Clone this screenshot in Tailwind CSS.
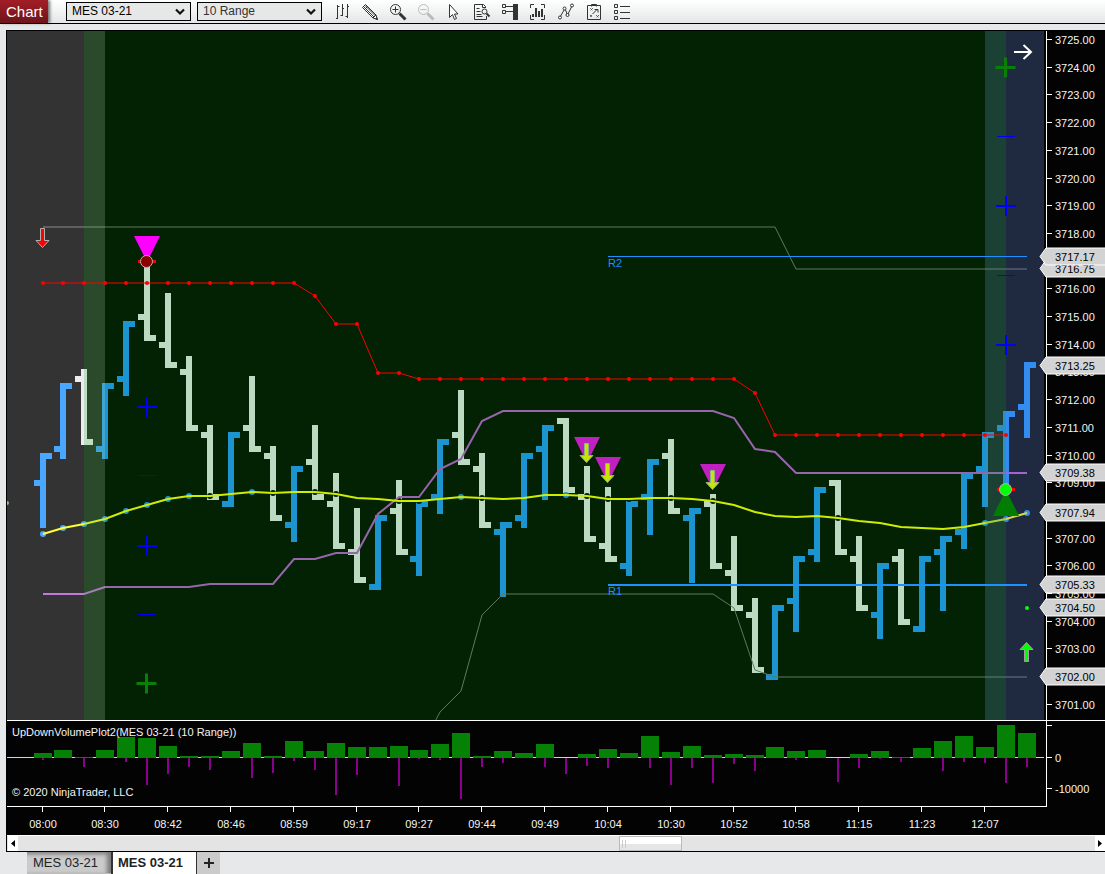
<!DOCTYPE html>
<html lang="en">
  <head>
    <meta charset="utf-8" />
    <meta name="viewport" content="width=device-width, initial-scale=1" />
    <title>Chart - MES 03-21</title>
    <script src="https://cdn.jsdelivr.net/npm/@tailwindcss/browser@4"></script>
  </head>
  <body class="flex min-h-screen flex-col bg-[#e6e8e9] font-['Liberation_Sans',Arial,sans-serif] text-[#222]">
    <header class="flex h-6 items-stretch border-b border-black bg-linear-to-b from-white to-[#e4e6e7]">
      <h1 class="w-12 bg-linear-to-b from-[#a31e26] to-[#6f141a] pl-1.5 text-[15px] leading-6 text-white shadow-[2px_0_3px_#0008]">Chart</h1>
      <div class="flex items-center gap-1.5 pl-[18px]">
        <label class="relative block">
          <span class="sr-only">Instrument</span>
          <select class="block h-[19px] w-[125px] appearance-none border border-black bg-[#e6e8e7] pl-[5px] text-[12px] leading-[17px] text-black">
            <option>MES 03-21</option>
          </select>
          <svg class="pointer-events-none absolute top-1.5 right-1.5 h-2 w-2.5" viewBox="0 0 10 8" fill="none" stroke="#111" stroke-width="2.2"><path d="M1 1.5l4 4 4-4" /></svg>
        </label>
        <label class="relative block">
          <span class="sr-only">Interval</span>
          <select class="block h-[19px] w-[125px] appearance-none border border-black bg-[#e6e8e7] pl-[5px] text-[12px] leading-[17px] text-[#333]">
            <option>10 Range</option>
          </select>
          <svg class="pointer-events-none absolute top-1.5 right-1.5 h-2 w-2.5" viewBox="0 0 10 8" fill="none" stroke="#111" stroke-width="2.2"><path d="M1 1.5l4 4 4-4" /></svg>
        </label>
      </div>
      <nav id="tools" class="flex items-center pl-1.5" aria-label="Chart tools"></nav>
    </header>

    <main class="mt-1.5 ml-1.5 border-t border-b border-l border-black bg-black">
      <svg id="chart" class="block h-auto w-full bg-[#030303] text-[11px]" viewBox="7 31 1098 804" role="img" aria-label="MES 03-21 10 Range chart"></svg>
      <div class="flex h-4 border-t border-white bg-[#e4e4e4]">
        <button class="ml-px flex w-2.5 items-center justify-center bg-white" aria-label="Scroll left">
          <svg class="h-[7px] w-1" viewBox="0 0 4 7"><path d="M4 0v7L0 3.5z" /></svg>
        </button>
        <div class="flex-[16]"></div>
        <div class="flex w-[63px] items-center gap-0.5 border border-[#bbb] bg-linear-to-b from-white from-50% to-[#e6e6e6] to-55% pl-0.5">
          <span class="h-2 w-px bg-[#ccc]"></span>
          <span class="h-2 w-px bg-[#ccc]"></span>
        </div>
        <div class="flex-[11]"></div>
        <button class="flex w-2.5 items-center justify-center bg-white" aria-label="Scroll right">
          <svg class="h-[7px] w-1" viewBox="0 0 4 7"><path d="M0 0v7l4-3.5z" /></svg>
        </button>
      </div>
    </main>

    <footer class="flex h-[22px] pl-[27px] text-[13px] leading-5">
      <button class="w-[84px] border-b border-[#bbb] bg-[#cbcbcb] pl-1.5 text-left shadow-[inset_-4px_2px_4px_#0006]">MES 03-21</button>
      <button class="w-[86px] border-r border-l-2 border-[#333] bg-white pl-[5px] text-left font-bold">MES 03-21</button>
      <button class="flex w-[23px] items-center justify-center bg-[#cbcbcb]" aria-label="New tab">
        <svg class="size-3" viewBox="0 0 12 12" stroke="#222" stroke-width="2"><path d="M6 1v10M1 6h10" /></svg>
      </button>
    </footer>

    <script>
      const icons = [
        ["Chart style", `<path d="M4.500 2v14M3 15.500h1M5 3.500h1.500M9.500 1v12M7.500 12.500h1.500M10 5.500h1M14.500 1v14M12.500 13.500h1.500M15 3.500h1"/>`],
        ["Drawing tools", `<path d="M1.500 4.500l3-3L15 12l1.500 4.500L12 15z" fill="#fff"/><path d="M2.500 3.500l10.500 10.500M4 2.500l10.500 10.500"/><path d="M3.500 6.500l3-3M12 15l3-3"/><path d="M14.500 15.500l1-1 1 2z" fill="#333"/>`],
        ["Zoom in", `<circle cx="6.500" cy="6.500" r="5"/><path d="M6.500 3.500v6M3.500 6.500h6"/><path d="M10.500 10.500l6 6" stroke-width="3"/>`],
        ["Zoom out", `<g stroke="#bbb"><circle cx="6.500" cy="6.500" r="5"/><path d="M3.500 6.500h6"/><path d="M10.500 10.500l6 6" stroke-width="3"/></g>`],
        ["Pointer", `<path d="M4.500 1.500v13l3-3 2 5 2-1-2-4.500h3.500z" fill="#fff"/>`],
        ["Data box", `<path d="M12.500 5V3.500l-2-2h-9v15h12V13M9.500 1.500v3h3M3.500 5.500h3M3.500 8.500h4M3.500 11.500h5M3.500 13.500h6"/><circle cx="11.500" cy="8.500" r="2.500"/><path d="M13.500 10.500l3 3" stroke-width="2"/>`],
        ["Chart trader", `<path d="M1.500 1.500h3v3h-3zM1.500 7.500h3v3h-3zM5 3.500h7M5 8.500h7"/><path d="M12 1h5v16h-5z" fill="#333" stroke="none"/>`],
        ["Indicators", `<path d="M1.500 5V1.500H5M12 1.500h3.500V5M1.500 12v4.500H5M12 16.500h3.500V12"/><path d="M4 14v-3M7 14V5M10 14V8M13 14V6" stroke-width="2"/>`],
        ["Strategies", `<path d="M3 14l5-8.500 2.500 6.500L15 3"/><g fill="#fff"><circle cx="3" cy="14.500" r="1.500"/><circle cx="7.500" cy="5.500" r="1.500"/><circle cx="10.500" cy="12" r="1.500"/><circle cx="15" cy="2.500" r="1.500"/></g>`],
        ["Properties", `<path d="M2.500 2.500h13v14h-13zM6.500 3.500v-2h5v2"/><path d="M5 5l3 3M8 5l-3 3M5 12l2 2M7 12l-2 2M11 12l3 3M14 12l-3 3" stroke-dasharray="1 1"/><path d="M7.500 11l5-5M9.500 6.500h3.500v3"/>`],
        ["Menu", `<path d="M1.500 1.500h3v3h-3zM1.500 7.500h3v3h-3zM1.500 13.500h3v3h-3zM7 3.500h10M7 9.500h10M7 15.500h10"/>`],
      ];

      document.getElementById("tools").innerHTML = icons
        .map(
          ([name, body]) => `
          <button class="flex h-5 w-7 items-center justify-center" title="${name}" aria-label="${name}">
            <svg class="size-[18px]" viewBox="0 0 18 18" fill="none" stroke="#333">${body}</svg>
          </button>`
        )
        .join("");

      // open, high, low, close
      const bars = [
        [3709, 3710, 3707.5, 3710],
        [3710.25, 3712.5, 3710, 3712.5],
        [3712.75, 3713, 3710.5, 3710.5],
        [3710.25, 3712.5, 3710, 3712.5],
        [3712.75, 3714.75, 3712.25, 3714.75],
        [3715, 3716.75, 3714.25, 3714.25],
        [3714, 3715.75, 3713.25, 3713.25],
        [3713, 3713.5, 3711, 3711],
        [3710.75, 3711, 3708.5, 3708.5],
        [3708.25, 3710.75, 3708.25, 3710.75],
        [3711, 3712.75, 3710.25, 3710.25],
        [3710, 3710.25, 3707.75, 3707.75],
        [3707.5, 3709.5, 3707, 3709.5],
        [3709.75, 3711, 3708.5, 3708.5],
        [3708.25, 3709.25, 3706.75, 3706.75],
        [3706.5, 3708, 3705.5, 3705.5],
        [3705.25, 3707.75, 3705.25, 3707.75],
        [3708, 3709, 3706.5, 3706.5],
        [3706.25, 3708.25, 3705.75, 3708.25],
        [3708.5, 3710.5, 3708, 3710.5],
        [3710.75, 3712.25, 3709.75, 3709.75],
        [3709.5, 3710, 3707.5, 3707.5],
        [3707.25, 3707.5, 3705, 3707.5],
        [3707.75, 3710, 3707.5, 3710],
        [3710.25, 3711, 3708.5, 3711],
        [3711.25, 3711.25, 3708.75, 3708.75],
        [3708.5, 3709.5, 3707, 3707],
        [3706.75, 3708.75, 3706.25, 3706.25],
        [3706, 3708.25, 3705.75, 3708.25],
        [3708.5, 3709.75, 3707.25, 3709.75],
        [3710, 3710.5, 3708, 3708],
        [3707.75, 3708, 3705.5, 3708],
        [3708.25, 3708.5, 3706, 3706],
        [3705.75, 3707, 3704.5, 3704.5],
        [3704.25, 3704.75, 3702.25, 3702.25],
        [3702, 3704.5, 3702, 3704.5],
        [3704.75, 3706.25, 3703.75, 3706.25],
        [3706.5, 3708.75, 3706.25, 3708.75],
        [3709, 3709, 3706.5, 3706.5],
        [3706.25, 3707, 3704.5, 3704.5],
        [3704.25, 3706, 3703.5, 3706],
        [3706.25, 3706.5, 3704, 3704],
        [3703.75, 3706.25, 3703.75, 3706.25],
        [3706.5, 3707, 3704.5, 3707],
        [3707.25, 3709.25, 3706.75, 3709.25],
        [3709.5, 3710.75, 3708.25, 3710.75],
        [3711, 3711.5, 3709, 3711.5],
        [3711.75, 3713.25, 3710.75, 3713.25],
      ];

      // volume above and below the zero line, in pixels
      const upVolume = [5, 8, 1, 8, 21, 20, 12, 2, 2, 7, 15, 2, 17, 7, 15, 11, 11, 12, 8, 14, 25, 2, 7, 5, 14, 0, 4, 9, 5, 22, 6, 12, 3, 4, 3, 11, 7, 8, 0, 4, 7, 1, 10, 17, 22, 11, 33, 25];
      const downVolume = [2, 0, 9, 0, 4, 27, 16, 9, 12, 0, 20, 15, 3, 12, 37, 17, 0, 28, 1, 2, 41, 9, 5, 0, 9, 16, 8, 10, 0, 10, 27, 10, 25, 6, 13, 0, 2, 0, 24, 10, 1, 4, 0, 13, 4, 5, 25, 9];

      const average = [534, 528, 524, 519, 511, 505, 499, 496, 496, 494, 492, 493, 492, 492, 494, 498, 499, 501, 501, 499, 497, 498, 499, 498, 495, 495, 496, 499, 499, 498, 498, 499, 501, 505, 512, 516, 517, 516, 518, 521, 523, 527, 528, 529, 527, 523, 519, 513];
      const risingDots = [0, 1, 2, 3, 4, 5, 6, 7, 10, 20, 25, 45, 46, 47];
      const fallingDots = [8, 11, 13, 14, 17, 18, 21, 26, 27, 28, 30, 32, 38];

      // [bar index, y]
      const middle = [[0, 594], [2, 594], [3, 587], [7, 587], [8, 584], [11, 584], [12, 559], [13, 559], [14, 553], [15, 553], [16, 514], [17, 497], [18, 497], [19, 469], [20, 459], [21, 421], [22, 411], [32, 411], [33, 418], [34, 449], [35, 452], [36, 473], [47, 473]];
      const upper = [[0, 227], [35, 227], [36, 269], [47, 269]];
      const lower = [[18, 752], [19, 712], [20, 691], [21, 615], [22, 594], [32, 594], [33, 608], [34, 670], [35, 677], [47, 677]];
      const stop = [...Array(13).fill(283), 296, 324, 324, 373, 373, ...Array(16).fill(379), 393, ...Array(12).fill(435)];

      const times = ["08:00", "08:30", "08:42", "08:46", "08:59", "09:17", "09:27", "09:44", "09:49", "10:04", "10:30", "10:52", "10:58", "11:15", "11:23", "12:07"];
      const markers = [[3716.75, 268], [3717.17, 256], [3713.25, 365], [3709.38, 472], [3707.94, 512], [3705.33, 584], [3704.5, 607], [3702, 676]];

      const barX = (i) => Math.floor(43.05 + i * 20.94);
      const priceY = (p) => Math.round(40 + (3725 - p) * 27.7);
      const line = (pts) => pts.map(([i, y]) => `${barX(i)},${y}`).join(" ");
      const rect = (x, y, w, h, cls) => `<rect x="${x}" y="${y}" width="${w}" height="${h}" class="${cls}"/>`;
      const plus = (x, y, w, cls) => `<path d="M${x - 10} ${y}h20M${x} ${y - 10}v20" stroke-width="${w}" class="${cls}"/>`;
      const dash = (x, y) => rect(x - 9, y, 18, 1, "fill-[#0000ff]");
      const arrowDown = (x, y, cls) => `<path d="M${x - 2} ${y}h4v12h4.500l-6.500 7l-6.500-7h4.500z" class="${cls}"/>`;

      const drawBar = ([open, high, low, close], i) => {
        const x = barX(i);
        const top = priceY(high) - 3;
        const cls = close === high ? "fill-[#1e90ff]" : "fill-[#e6e8ee]";
        return (
          rect(x - 3, top, 6, priceY(low) + 3 - top, cls) +
          rect(x - 9, priceY(open) - 3, 6, 6, cls) +
          rect(x + 3, priceY(close) - 3, 6, 6, cls)
        );
      };

      const drawDots = (list, cls) => list.map((i) => `<circle cx="${barX(i)}" cy="${average[i]}" r="3" class="${cls}"/>`).join("");

      const drawSell = (x, y) => `
        <path d="M${x - 13} ${y}h26l-13 26z" class="fill-[#c020c0]"/>
        ${arrowDown(x - 0.5, y + 6.5, "fill-[#c8e600] stroke-[#8fb080]")}`;

      const drawMarker = ([price, y]) => `
        <path d="M1040 ${y + 0.5}l6-8.500h60v17h-60z" class="fill-[#d3d3d3] stroke-white"/>
        <text x="1055" y="${y + 5}" class="fill-black">${price.toFixed(2)}</text>`;

      const drawTick = (y) => rect(1047, y, 5, 1, "fill-white");

      const pricePanel = `
        <clipPath id="plot"><rect x="7" y="31" width="1037" height="689"/></clipPath>
        <g clip-path="url(#plot)">
          ${rect(7, 31, 1037, 689, "fill-black")}
          ${bars.map(drawBar).join("")}
          ${drawDots(risingDots, "fill-[#1e90ff]")}
          ${drawDots(fallingDots, "fill-black")}
          <g fill="none">
            <polyline points="${line(upper)}" class="stroke-[#707070]"/>
            <polyline points="${line(lower)}" class="stroke-[#707070]"/>
            <polyline points="${line(middle)}" stroke-width="2" class="stroke-[#ba55d3]"/>
            <polyline points="${line(average.map((y, i) => [i, y]))}" stroke-width="2" class="stroke-[#ffff00]"/>
          </g>
          ${rect(7, 31, 98, 689, "fill-white/20")}
          ${rect(985, 31, 59, 689, "fill-[#6888d2]/30")}
          ${rect(84, 31, 922, 689, "fill-[#10a410]/20")}
          <polyline points="${line(stop.map((y, i) => [i, y]))}" fill="none" class="stroke-[#ff0000]"/>
          ${stop.map((y, i) => `<circle cx="${barX(i)}" cy="${y}" r="2" class="fill-[#ff0000]"/>`).join("")}
          <circle cx="7" cy="503" r="2" class="fill-[#a0b0a8]"/>
        </g>
        ${rect(608, 256, 419, 1, "fill-[#1e90ff]")}
        ${rect(608, 584, 419, 2, "fill-[#1e90ff]")}
        <text x="608" y="267" class="fill-[#1e90ff]">R2</text>
        <text x="608" y="595" class="fill-[#1e90ff]">R1</text>

        ${arrowDown(42.5, 228.5, "fill-[#ff0000] stroke-[#b0b0b0]")}
        <path d="M134 236h26l-13 26z" class="fill-[#ff00ff]"/>
        ${rect(138, 260, 18, 3, "fill-[#ff0000]")}
        <circle cx="146.500" cy="261.500" r="6" class="fill-[#8b0000] stroke-[#b0b0b0]"/>
        ${drawSell(587, 437)}
        ${drawSell(608, 457)}
        ${drawSell(713, 464)}
        <path d="M1006 490l13 26h-26z" class="fill-[#008000]/95"/>
        ${rect(997, 488, 18, 3, "fill-[#ff0000]")}
        <circle cx="1005.500" cy="489.500" r="6" class="fill-[#00ff00] stroke-[#b0b0b0]"/>
        <path d="M1026.500 642.500l6.500 7h-4.500v12h-4v-12h-4.500z" class="fill-[#00ff00] stroke-[#a0a0a0]"/>
        <circle cx="1027" cy="608" r="2" class="fill-[#00ff00]"/>

        ${plus(147, 407, 2, "stroke-[#0000ff]")}
        ${plus(147, 546, 2, "stroke-[#0000ff]")}
        ${plus(146.5, 683.5, 3, "stroke-[#088008]")}
        ${dash(147, 475)}
        ${dash(147, 614)}
        ${plus(1005.5, 67.5, 3, "stroke-[#088008]")}
        ${plus(1006, 206, 2, "stroke-[#0000ff]")}
        ${plus(1006, 345, 2, "stroke-[#0000ff]")}
        ${dash(1006, 136)}
        ${dash(1006, 275)}
        <path d="M1014 52h17M1023.500 45l7.500 7-7.500 7" fill="none" stroke-width="2" class="stroke-white"/>`;

      const volumePanel = `
        ${rect(7, 757, 1037, 1, "fill-[#d3d3d3]")}
        ${bars
          .map((_, i) => {
            const x = barX(i);
            return (
              rect(x - 9, 758 - upVolume[i], 18, upVolume[i], "fill-[#058205]") +
              rect(x - 1, 758, 2, downVolume[i], "fill-[#8b008b]")
            );
          })
          .join("")}
        <text x="12" y="736">UpDownVolumePlot2(MES 03-21 (10 Range))</text>
        <text x="12" y="796">© 2020 NinjaTrader, LLC</text>
        ${[725, 757, 788].map(drawTick).join("")}
        <text x="1055" y="762">0</text>
        <text x="1055" y="793">-10000</text>`;

      const priceAxis = `
        ${Array.from({ length: 25 }, (_, n) => 3725 - n)
          .map((p) => `${drawTick(priceY(p) - 1)}<text x="1055" y="${priceY(p) + 4}">${p}.00</text>`)
          .join("")}
        ${markers.map(drawMarker).join("")}`;

      const timeAxis = times
        .map((t, n) => {
          const x = barX(n * 3);
          return `${rect(x - 1, 807, 1, 5, "fill-white")}<text x="${x}" y="828" text-anchor="middle">${t}</text>`;
        })
        .join("");

      document.getElementById("chart").innerHTML = `
        <g class="fill-[#f4f4f4]">
          ${pricePanel}
          ${rect(7, 720, 1098, 1, "fill-white")}
          ${rect(7, 806, 1040, 1, "fill-white")}
          ${rect(1046, 31, 1, 776, "fill-white")}
          ${volumePanel}
          ${priceAxis}
          ${timeAxis}
        </g>`;
    </script>
  </body>
</html>
